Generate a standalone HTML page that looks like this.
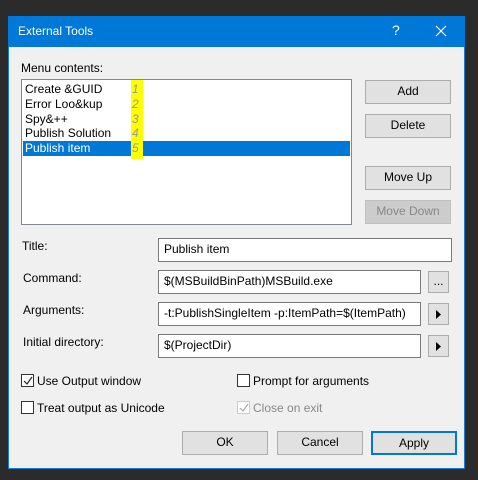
<!DOCTYPE html>
<html><head><style>
*{box-sizing:border-box;margin:0;padding:0}
body{width:478px;height:480px;background:#2b2b2b;font-family:"Liberation Sans",sans-serif;font-size:12px;color:#000;position:relative;overflow:hidden}
.a{position:absolute}
.dlg{left:8px;top:16px;width:457px;height:453px;background:#f0f0f0;border:1px solid #1c7bd6}
.tb{left:8px;top:16px;width:457px;height:31px;background:#0078d7;color:#fff}
.btn{position:absolute;background:#e1e1e1;border:1px solid #adadad;text-align:center;font-size:12px;line-height:21px}
.tx{position:absolute;background:#fff;border:1px solid #7a7a7a;padding-left:5px;line-height:21px;font-size:12px;white-space:nowrap;overflow:hidden}
.cb{position:absolute;width:13px;height:13px;border:1px solid #333;background:#fff}
.lbl{position:absolute;font-size:12px}
</style></head><body>
<div class="a dlg"></div>
<div class="a tb"><span class="a" style="left:10px;top:8px;font-size:12px">External Tools</span><span class="a" style="left:384px;top:6px;font-size:14px">?</span>
<svg class="a" style="left:427px;top:9px" width="12" height="12"><path d="M1 1L11 11M11 1L1 11" stroke="#fff" stroke-width="1.2"/></svg></div>
<div class="lbl" style="left:21px;top:61px">Menu contents:</div>
<div class="a" style="left:21px;top:79px;width:331px;height:146px;background:#fff;border:1px solid #828790"></div>
<div class="a" style="left:23px;top:141px;width:327px;height:15px;background:#0078d7"></div>
<div class="a" style="left:131px;top:80px;width:12px;height:79px;background:#ffff00"></div>
<div class="lbl" style="left:25px;top:82px;line-height:14.8px">Create &amp;GUID<br>Error Loo&amp;kup<br>Spy&amp;++<br>Publish Solution<br><span style="color:#fff">Publish item</span></div>
<div class="lbl" style="left:132px;top:82px;line-height:14.8px;color:#999;font-style:italic">1<br>2<br>3<br>4<br>5</div>
<div class="btn" style="left:365px;top:80px;width:86px;height:24px">Add</div>
<div class="btn" style="left:365px;top:114px;width:86px;height:24px">Delete</div>
<div class="btn" style="left:365px;top:166px;width:86px;height:24px">Move Up</div>
<div class="btn" style="left:365px;top:200px;width:86px;height:24px;background:#ccc;border-color:#bfbfbf;color:#888">Move Down</div>
<div class="lbl" style="left:22px;top:239px">Title:</div>
<div class="tx" style="left:158px;top:238px;width:294px;height:24px">Publish item</div>
<div class="lbl" style="left:23px;top:271px">Command:</div>
<div class="tx" style="left:158px;top:270px;width:263px;height:24px">$(MSBuildBinPath)MSBuild.exe</div>
<div class="btn" style="left:428px;top:271px;width:21px;height:22px;line-height:18px">...</div>
<div class="lbl" style="left:23px;top:303px">Arguments:</div>
<div class="tx" style="left:158px;top:302px;width:263px;height:24px">-t:PublishSingleItem -p:ItemPath=$(ItemPath)</div>
<div class="btn" style="left:428px;top:303px;width:21px;height:22px"><svg class="a" style="left:7px;top:6px" width="6" height="9"><path d="M0 0L5 4.5L0 9Z"/></svg></div>
<div class="lbl" style="left:23px;top:335px">Initial directory:</div>
<div class="tx" style="left:158px;top:334px;width:263px;height:24px">$(ProjectDir)</div>
<div class="btn" style="left:428px;top:335px;width:21px;height:22px"><svg class="a" style="left:7px;top:6px" width="6" height="9"><path d="M0 0L5 4.5L0 9Z"/></svg></div>
<div class="cb" style="left:21px;top:374px"><svg class="a" style="left:1px;top:1px" width="10" height="10"><path d="M1 5L4 8L9 1" stroke="#222" fill="none" stroke-width="1.2"/></svg></div>
<div class="lbl" style="left:37px;top:374px">Use Output window</div>
<div class="cb" style="left:237px;top:374px"></div>
<div class="lbl" style="left:253px;top:374px">Prompt for arguments</div>
<div class="cb" style="left:21px;top:401px"></div>
<div class="lbl" style="left:37px;top:401px">Treat output as Unicode</div>
<div class="cb" style="left:237px;top:401px;border-color:#ccc"><svg class="a" style="left:1px;top:1px" width="10" height="10"><path d="M1 5L4 8L9 1" stroke="#aaa" fill="none" stroke-width="1.2"/></svg></div>
<div class="lbl" style="left:253px;top:401px;color:#888">Close on exit</div>
<div class="btn" style="left:182px;top:431px;width:86px;height:24px">OK</div>
<div class="btn" style="left:277px;top:431px;width:86px;height:24px">Cancel</div>
<div class="btn" style="left:371px;top:431px;width:86px;height:24px;border:2px solid #0078d7;line-height:20px">Apply</div>
</body></html>
